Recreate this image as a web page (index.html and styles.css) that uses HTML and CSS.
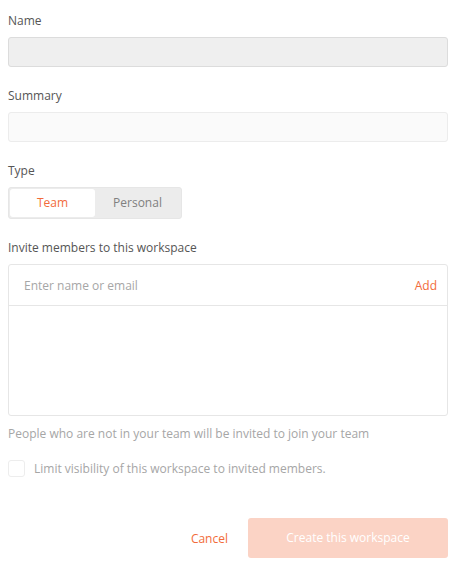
FILE: index.html
```html
<!doctype html>
<html lang="en">

<head>
  <meta charset="utf-8">
  <title>Create workspace</title>
  <meta name="viewport" content="width=device-width, initial-scale=1">
  <link rel="stylesheet" href="styles.css">
</head>

<body>
  <form class="workspace-form">
    <div class="field">
      <label class="field-label">Name</label>
      <div class="input input-name"></div>
    </div>

    <div class="field">
      <label class="field-label">Summary</label>
      <div class="input input-summary"></div>
    </div>

    <div class="field">
      <label class="field-label">Type</label>
      <div class="toggle">
        <span class="toggle-item active">Team</span>
        <span class="toggle-item">Personal</span>
      </div>
    </div>

    <div class="field">
      <label class="field-label">Invite members to this workspace</label>
      <div class="invite-box">
        <div class="invite-row">
          <span class="placeholder">Enter name or email</span>
          <span class="add-link">Add</span>
        </div>
        <div class="invite-list"></div>
      </div>
      <p class="helper">People who are not in your team will be invited to join your team</p>
    </div>

    <div class="check-row">
      <span class="checkbox"></span>
      <span class="check-label">Limit visibility of this workspace to invited members.</span>
    </div>

    <div class="actions">
      <span class="cancel">Cancel</span>
      <span class="btn-create">Create this workspace</span>
    </div>
  </form>
</body>

</html>
```

FILE: styles.css
```css
body {
  background: #fff;
  font-family: "Open Sans", "Liberation Sans", sans-serif;
  font-size: 12px;
  margin: 0;
  color: #555;
}

.workspace-form {
  padding: 11px 11px 0 8px;
}

.field {
  margin-bottom: 19px;
}

.field-label {
  display: block;
  line-height: 18px;
  padding-top: 1px;
  margin-bottom: 7px;
  color: #555;
}

.input {
  height: 28px;
  border-radius: 3px;
}

.input-name {
  background: #efefef;
  border: 1px solid #dcdcdc;
}

.input-summary {
  background: #fafafa;
  border: 1px solid #ececec;
}

.toggle {
  display: inline-flex;
  background: #ececec;
  border: 1px solid #e6e6e6;
  border-radius: 3px;
  padding: 1px;
}

.toggle-item {
  width: 85px;
  height: 28px;
  line-height: 28px;
  text-align: center;
  color: #808080;
  border-radius: 3px;
}

.toggle-item.active {
  background: #fff;
  color: #f26b3a;
}

.invite-box {
  border: 1px solid #e6e6e6;
  border-radius: 3px;
}

.invite-row {
  display: flex;
  justify-content: space-between;
  align-items: center;
  height: 40px;
  padding: 0 10px 0 15px;
  border-bottom: 1px solid #e6e6e6;
}

.placeholder {
  color: #a6a6a6;
}

.add-link {
  color: #f26b3a;
}

.invite-list {
  height: 109px;
}

.helper {
  margin: 9px 0 0;
  line-height: 18px;
  color: #a6a6a6;
}

.check-row {
  display: flex;
  align-items: center;
  margin-top: -2px;
}

.checkbox {
  width: 15px;
  height: 15px;
  border: 1px solid #ededed;
  border-radius: 3px;
  margin-right: 9px;
}

.check-label {
  color: #a6a6a6;
}

.actions {
  display: flex;
  justify-content: flex-end;
  align-items: center;
  margin-top: 41px;
}

.cancel {
  color: #f26b3a;
  margin-right: 20px;
}

.btn-create {
  width: 200px;
  height: 40px;
  line-height: 40px;
  text-align: center;
  background: #fbd3c5;
  color: #fff;
  border-radius: 3px;
}
```
